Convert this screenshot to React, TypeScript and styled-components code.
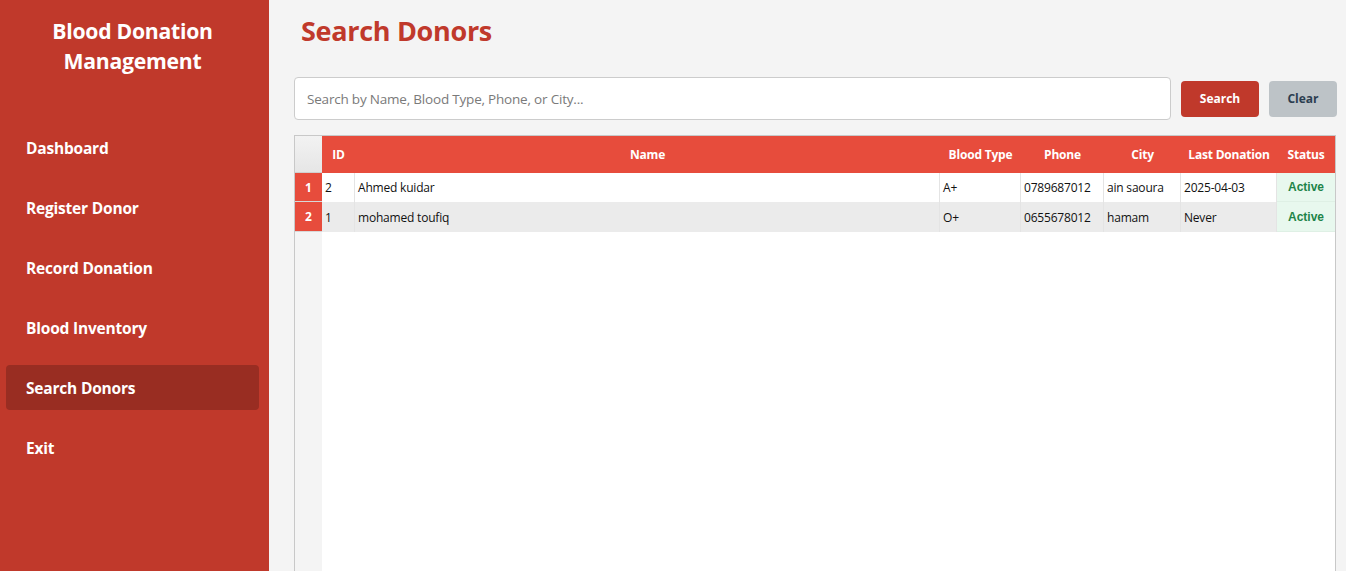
import React from "react";
import styled, { createGlobalStyle } from "styled-components";

const Global = createGlobalStyle`
  html, body { margin: 0; padding: 0; height: 100%; overflow: hidden; }
  body { font-family: "Open Sans", "Noto Sans", sans-serif; background: #f4f4f4; }
  #root { height: 100%; }
  * { box-sizing: border-box; }
`;

const Layout = styled.div`
  display: flex;
  height: 571px;
  width: 1346px;
`;

const Sidebar = styled.aside`
  width: 269px;
  flex-shrink: 0;
  background: #c0392b;
  display: flex;
  flex-direction: column;
  padding: 16px 10px 0 6px;
`;

const Brand = styled.h1`
  margin: 0 0 49px 0;
  color: #fff;
  font-size: 21.2px;
  line-height: 30px;
  font-weight: 700;
  text-align: center;
  letter-spacing: -0.25px;
`;

const Nav = styled.nav`
  display: flex;
  flex-direction: column;
  gap: 15px;
`;

const NavItem = styled.div<{ $active?: boolean }>`
  height: 45px;
  display: flex;
  align-items: center;
  padding-left: 20px;
  border-radius: 4px;
  color: #fff;
  font-size: 15.5px;
  font-weight: 700;
  letter-spacing: -0.2px;
  background: ${(p) => (p.$active ? "#992d22" : "transparent")};
`;

const Main = styled.main`
  flex: 1;
  display: flex;
  flex-direction: column;
  padding: 12px 9px 0 25px;
  min-width: 0;
`;

const Title = styled.h2`
  margin: 0 0 27px 7px;
  color: #c0392b;
  font-size: 27px;
  line-height: 38px;
  font-weight: 700;
  letter-spacing: -0.3px;
`;

const SearchBar = styled.div`
  display: flex;
  align-items: center;
  gap: 10px;
  margin-bottom: 15px;
`;

const SearchInput = styled.input`
  flex: 1;
  height: 43px;
  border: 1px solid #cccccc;
  border-radius: 4px;
  background: #fff;
  padding: 0 12px;
  font-family: "Open Sans", "Noto Sans", sans-serif;
  font-size: 13.5px;
  color: #333;
  outline: none;
  &::placeholder { color: #7a7a7a; letter-spacing: -0.2px; }
`;

const Button = styled.button<{ $variant: "primary" | "secondary" }>`
  height: 36px;
  border: none;
  border-radius: 4px;
  padding: 0;
  width: ${(p) => (p.$variant === "primary" ? "78px" : "68px")};
  background: ${(p) => (p.$variant === "primary" ? "#c0392b" : "#bdc3c7")};
  color: ${(p) => (p.$variant === "primary" ? "#ffffff" : "#2c3e50")};
  font-family: "Open Sans", "Noto Sans", sans-serif;
  font-size: 12px;
  font-weight: 700;
`;

const Table = styled.div`
  flex: 1;
  display: flex;
  flex-direction: column;
  border: 1px solid #c8c8c8;
  border-bottom: none;
  background: #fff;
  margin-right: 1px;
`;

const cols = "27px 33px 1fr 81px 83px 77px 96px 58px";

const HeaderRow = styled.div`
  display: grid;
  grid-template-columns: ${cols};
  height: 37px;
  background: #e74c3c;
`;

const Corner = styled.div`
  background: linear-gradient(#f2f2f2, #e6e6e6);
  border-bottom: 1px solid #d0d0d0;
`;

const HeadCell = styled.div`
  display: flex;
  align-items: center;
  justify-content: center;
  color: #fff;
  font-size: 12px;
  font-weight: 700;
  letter-spacing: -0.2px;
  white-space: nowrap;
`;

const Row = styled.div<{ $alt?: boolean }>`
  display: grid;
  grid-template-columns: ${cols};
  height: ${(p) => (p.$alt ? "30px" : "29px")};
  background: ${(p) => (p.$alt ? "#ebebeb" : "#ffffff")};
`;

const RowNum = styled.div`
  background: #e74c3c;
  color: #fff;
  font-size: 12px;
  font-weight: 700;
  display: flex;
  align-items: center;
  justify-content: center;
  border-bottom: 1px solid #d8d8d8;
`;

const Cell = styled.div`
  display: flex;
  align-items: center;
  padding-left: 3px;
  font-size: 12px;
  color: #111;
  letter-spacing: -0.2px;
  border-right: 1px solid #e4e4e4;
  white-space: nowrap;
  overflow: hidden;
`;

const StatusCell = styled.div`
  display: flex;
  align-items: center;
  justify-content: center;
  background: #e8f8ee;
  color: #1e8449;
  font-family: "Liberation Sans", Arial, sans-serif;
  font-size: 12px;
  font-weight: 700;
  border-bottom: 1px solid #dff0e5;
`;

const Filler = styled.div`
  flex: 1;
  display: grid;
  grid-template-columns: ${cols};
`;

const FillerGutter = styled.div`
  background: #f4f4f4;
`;

const donors = [
  { id: "2", name: "Ahmed kuidar", type: "A+", phone: "0789687012", city: "ain saoura", last: "2025-04-03" },
  { id: "1", name: "mohamed toufiq", type: "O+", phone: "0655678012", city: "hamam", last: "Never" },
];

const navItems = ["Dashboard", "Register Donor", "Record Donation", "Blood Inventory", "Search Donors", "Exit"];

export default function App() {
  return (
    <>
      <Global />
      <Layout>
        <Sidebar>
          <Brand>
            Blood Donation
            <br />
            Management
          </Brand>
          <Nav>
            {navItems.map((n) => (
              <NavItem key={n} $active={n === "Search Donors"}>
                {n}
              </NavItem>
            ))}
          </Nav>
        </Sidebar>
        <Main>
          <Title>Search Donors</Title>
          <SearchBar>
            <SearchInput placeholder="Search by Name, Blood Type, Phone, or City..." />
            <Button $variant="primary">Search</Button>
            <Button $variant="secondary">Clear</Button>
          </SearchBar>
          <Table>
            <HeaderRow>
              <Corner />
              <HeadCell>ID</HeadCell>
              <HeadCell>Name</HeadCell>
              <HeadCell>Blood Type</HeadCell>
              <HeadCell>Phone</HeadCell>
              <HeadCell>City</HeadCell>
              <HeadCell>Last Donation</HeadCell>
              <HeadCell>Status</HeadCell>
            </HeaderRow>
            {donors.map((d, i) => (
              <Row key={d.id} $alt={i % 2 === 1}>
                <RowNum>{i + 1}</RowNum>
                <Cell>{d.id}</Cell>
                <Cell>{d.name}</Cell>
                <Cell>{d.type}</Cell>
                <Cell>{d.phone}</Cell>
                <Cell>{d.city}</Cell>
                <Cell>{d.last}</Cell>
                <StatusCell>Active</StatusCell>
              </Row>
            ))}
            <Filler>
              <FillerGutter />
            </Filler>
          </Table>
        </Main>
      </Layout>
    </>
  );
}
